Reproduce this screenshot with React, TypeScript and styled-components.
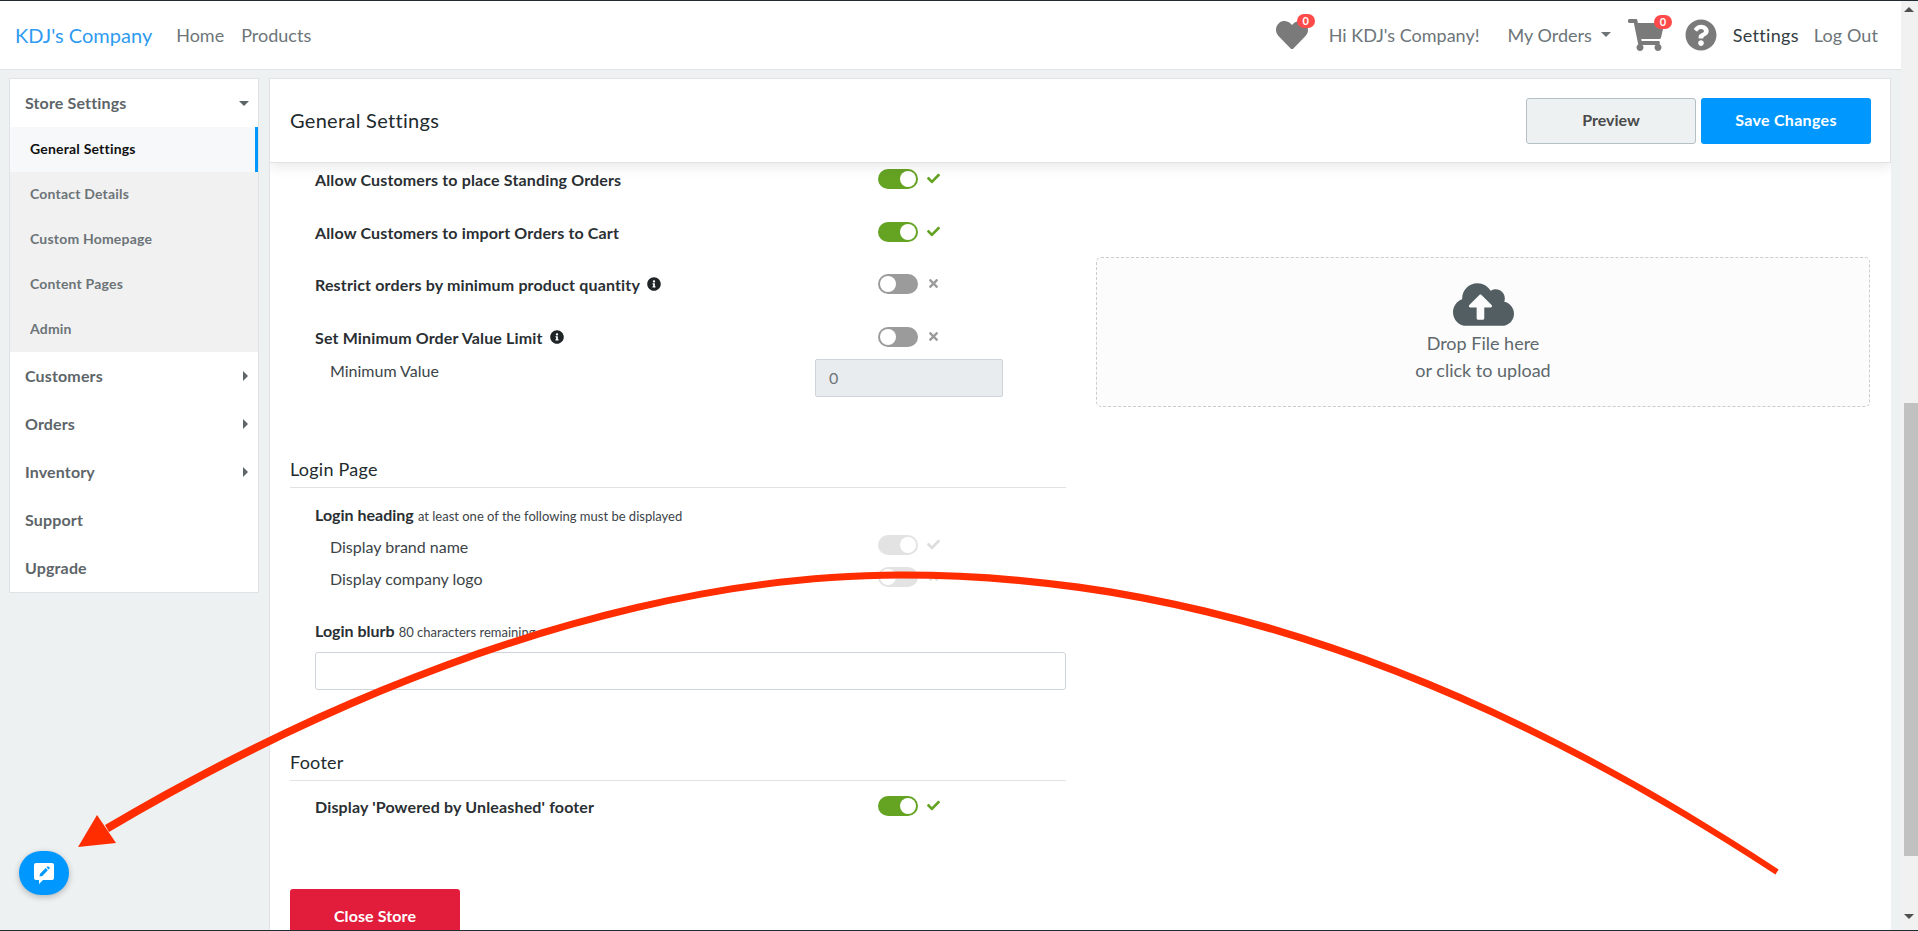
import { ReactNode } from "react";
import styled, { createGlobalStyle } from "styled-components";
import {
  FaCheck,
  FaTimes,
  FaHeart,
  FaShoppingCart,
  FaQuestionCircle,
  FaInfoCircle,
  FaCloudUploadAlt,
} from "react-icons/fa";

const GlobalStyle = createGlobalStyle`
  html, body {
    margin: 0;
    height: 931px;
    overflow: hidden;
    background: #eef1f2;
    font-family: "Lato", "Liberation Sans", sans-serif;
  }
  * { box-sizing: border-box; }
`;

const subItems = ["General Settings", "Contact Details", "Custom Homepage", "Content Pages", "Admin"];
const menuItems = [
  { label: "Customers", arrow: true },
  { label: "Orders", arrow: true },
  { label: "Inventory", arrow: true },
  { label: "Support", arrow: false },
  { label: "Upgrade", arrow: false },
];

const Toggle = ({ on, disabled }: { on: boolean; disabled?: boolean }) => (
  <ToggleWrap>
    <Track $on={on} $disabled={disabled}>
      <Knob />
    </Track>
    <ToggleMark $on={on} $disabled={disabled}>
      {on ? <FaCheck /> : <FaTimes />}
    </ToggleMark>
  </ToggleWrap>
);

const SettingRow = ({
  label,
  info,
  on,
  gap,
}: {
  label: string;
  info?: boolean;
  on: boolean;
  gap: number;
}) => (
  <Row $gap={gap}>
    <RowLabel>
      {label}
      {info && (
        <InfoMark>
          <FaInfoCircle />
        </InfoMark>
      )}
    </RowLabel>
    <Toggle on={on} />
  </Row>
);

const Section = ({ title, children }: { title: string; children: ReactNode }) => (
  <SectionWrap>
    <SectionTitle>{title}</SectionTitle>
    {children}
  </SectionWrap>
);

export default function App() {
  return (
    <>
      <GlobalStyle />
      <Screen>
        <Page>
          <Header>
            <Brand>KDJ's Company</Brand>
            <NavLink $left={24}>Home</NavLink>
            <NavLink $left={17}>Products</NavLink>
            <HeaderRight>
              <IconBadge $size={32}>
                <FaHeart />
                <Badge $top={-5} $right={-7}>
                  0
                </Badge>
              </IconBadge>
              <NavLink $left={21}>Hi KDJ's Company!</NavLink>
              <NavLink $left={28}>My Orders</NavLink>
              <NavCaret />
              <IconBadge $size={36} $left={17}>
                <FaShoppingCart />
                <Badge $top={-2} $right={-8}>
                  0
                </Badge>
              </IconBadge>
              <IconBadge $size={32} $left={21}>
                <FaQuestionCircle />
              </IconBadge>
              <NavLink $left={16} $dark $spacing={0.3}>
                Settings
              </NavLink>
              <NavLink $left={15} $spacing={0.1}>
                Log Out
              </NavLink>
            </HeaderRight>
          </Header>
          <Body>
            <SidebarColumn>
              <Sidebar>
                <MenuRow $height={48}>
                  Store Settings
                  <CaretDown />
                </MenuRow>
                {subItems.map((item, i) => (
                  <SubItem key={item} $active={i === 0}>
                    {item}
                  </SubItem>
                ))}
                {menuItems.map((item) => (
                  <MenuRow key={item.label} $height={48}>
                    {item.label}
                    {item.arrow && <CaretRight />}
                  </MenuRow>
                ))}
              </Sidebar>
            </SidebarColumn>
            <Main>
              <TitleBar>
                <PageTitle>General Settings</PageTitle>
                <TitleActions>
                  <PreviewButton>Preview</PreviewButton>
                  <SaveButton>Save Changes</SaveButton>
                </TitleActions>
              </TitleBar>
              <Columns>
                <LeftColumn>
                  <Rows>
                    <SettingRow label="Allow Customers to place Standing Orders" on gap={33} />
                    <SettingRow label="Allow Customers to import Orders to Cart" on gap={32} />
                    <SettingRow label="Restrict orders by minimum product quantity" info on={false} gap={33} />
                    <SettingRow label="Set Minimum Order Value Limit" info on={false} gap={12} />
                    <MinimumRow>
                      <SubLabel $width={500}>Minimum Value</SubLabel>
                      <ValueInput>0</ValueInput>
                    </MinimumRow>
                  </Rows>
                  <Section title="Login Page">
                    <FieldHeading>
                      <strong>Login heading</strong> <small>at least one of the following must be displayed</small>
                    </FieldHeading>
                    <OptionList>
                      <OptionRow>
                        <SubLabel $width={563}>Display brand name</SubLabel>
                        <Toggle on disabled />
                      </OptionRow>
                      <OptionRow>
                        <SubLabel $width={563}>Display company logo</SubLabel>
                        <Toggle on={false} disabled />
                      </OptionRow>
                    </OptionList>
                    <BlurbHeading>
                      <strong>Login blurb</strong> <small>80 characters remaining.</small>
                    </BlurbHeading>
                    <TextBox />
                  </Section>
                  <FooterSection>
                    <SectionTitle>Footer</SectionTitle>
                    <FooterRow>
                      <SettingRow label="Display 'Powered by Unleashed' footer" on gap={0} />
                    </FooterRow>
                  </FooterSection>
                  <CloseButton>Close Store</CloseButton>
                </LeftColumn>
                <RightColumn>
                  <DropZone>
                    <CloudIcon>
                      <FaCloudUploadAlt />
                    </CloudIcon>
                    <DropText>Drop File here</DropText>
                    <DropText>or click to upload</DropText>
                  </DropZone>
                </RightColumn>
              </Columns>
            </Main>
          </Body>
        </Page>
        <ScrollTrack>
          <ScrollUp />
          <ScrollThumb />
          <ScrollDown />
        </ScrollTrack>
        <FeedbackButton>
          <svg width="22" height="22" viewBox="0 0 22 22">
            <path
              d="M3 1h16a2 2 0 0 1 2 2v13a2 2 0 0 1-2 2h-9l-4 4v-4H3a2 2 0 0 1-2-2V3a2 2 0 0 1 2-2z"
              fill="#fff"
            />
            <path d="M6.5 14.5l.6-2.8 5.6-5.6 2.2 2.2-5.6 5.6z" fill="#0098ff" />
            <path d="M13.5 5.3l.9-.9a.8.8 0 0 1 1.1 0l1.1 1.1a.8.8 0 0 1 0 1.1l-.9.9z" fill="#0098ff" />
          </svg>
        </FeedbackButton>
        <Annotation width="1918" height="931" viewBox="0 0 1918 931">
          <path
            d="M105 825C355 677 640 572 900 571.5C1165 571 1447 650.5 1778.6 869.5L1775.4 874.5C1447 659.5 1165 578.5 900 578.5C640 579 359 684 109 832Z"
            fill="#ff2d00"
          />
          <path d="M78 847L97 815L116 843Z" fill="#ff2d00" />
        </Annotation>
      </Screen>
    </>
  );
}

const Screen = styled.div`
  position: relative;
  display: flex;
  width: 1918px;
  height: 931px;
  overflow: hidden;
  border-top: 1px solid #1f2d33;
  border-bottom: 1px solid #1f2d33;
`;

const Page = styled.div`
  display: flex;
  flex-direction: column;
  width: 1901px;
  background: #eef1f2;
`;

const Header = styled.header`
  display: flex;
  align-items: center;
  flex: none;
  height: 69px;
  padding: 0 23px 0 15px;
  background: #fff;
  border-bottom: 1px solid #dfe3e5;
`;

const Brand = styled.div`
  font-size: 20px;
  color: #2f9bf0;
`;

const NavLink = styled.div<{ $left: number; $dark?: boolean; $spacing?: number }>`
  margin-left: ${(p) => p.$left}px;
  font-size: 18px;
  letter-spacing: ${(p) => p.$spacing ?? 0}px;
  color: ${(p) => (p.$dark ? "#333d42" : "#6d7579")};
  white-space: nowrap;
`;

const HeaderRight = styled.div`
  display: flex;
  align-items: center;
  margin-left: auto;
`;

const IconBadge = styled.div<{ $size: number; $left?: number }>`
  position: relative;
  display: flex;
  margin-left: ${(p) => p.$left ?? 0}px;
  font-size: ${(p) => p.$size}px;
  color: #7a7a7a;
`;

const Badge = styled.span<{ $top: number; $right: number }>`
  position: absolute;
  top: ${(p) => p.$top}px;
  right: ${(p) => p.$right}px;
  width: 18px;
  height: 14px;
  border-radius: 7px;
  background: #ff4a4a;
  color: #fff;
  font-size: 11px;
  font-weight: 700;
  line-height: 14px;
  text-align: center;
`;

const NavCaret = styled.span`
  margin: -2px 0 0 9px;
  border-left: 5px solid transparent;
  border-right: 5px solid transparent;
  border-top: 5px solid #6d7579;
`;

const Body = styled.div`
  display: flex;
  flex: 1;
  min-height: 0;
`;

const SidebarColumn = styled.aside`
  flex: none;
  width: 269px;
  padding: 8px 10px 0 9px;
`;

const Sidebar = styled.nav`
  background: #fff;
  border: 1px solid #dfe3e5;
`;

const MenuRow = styled.div<{ $height: number }>`
  display: flex;
  align-items: center;
  justify-content: space-between;
  height: ${(p) => p.$height}px;
  padding: 0 9px 2px 15px;
  font-size: 16px;
  font-weight: 700;
  letter-spacing: 0.15px;
  color: #5d6569;
`;

const SubItem = styled.div<{ $active?: boolean }>`
  display: flex;
  align-items: center;
  height: 45px;
  padding: 0 0 2px 20px;
  font-size: 14px;
  font-weight: 700;
  letter-spacing: 0.2px;
  color: ${(p) => (p.$active ? "#111" : "#6c7478")};
  background: ${(p) => (p.$active ? "#f7f8fa" : "#f1f1f1")};
  border-right: ${(p) => (p.$active ? "3px solid #0098ff" : "0")};
`;

const CaretDown = styled.span`
  margin-top: 3px;
  border-left: 5px solid transparent;
  border-right: 5px solid transparent;
  border-top: 5px solid #5d6569;
`;

const CaretRight = styled.span`
  margin: 2px 1px 0 0;
  border-top: 5px solid transparent;
  border-bottom: 5px solid transparent;
  border-left: 5px solid #5d6569;
`;

const Main = styled.main`
  display: flex;
  flex-direction: column;
  flex: none;
  width: 1622px;
  margin-top: 8px;
  background: #fff;
  border-left: 1px solid #dfe3e5;
  overflow: hidden;
`;

const TitleBar = styled.div`
  position: relative;
  z-index: 1;
  display: flex;
  align-items: center;
  justify-content: space-between;
  flex: none;
  height: 85px;
  padding: 0 19px 0 20px;
  background: #fff;
  border: 1px solid #dfe3e5;
  border-left: 0;
  box-shadow: 0 4px 12px rgba(0, 0, 0, 0.09);
`;

const PageTitle = styled.h1`
  margin: 0 0 2px;
  font-size: 20px;
  font-weight: 400;
  letter-spacing: 0.3px;
  color: #222a2e;
`;

const TitleActions = styled.div`
  display: flex;
  gap: 5px;
`;

const PreviewButton = styled.button`
  width: 170px;
  height: 46px;
  padding-bottom: 3px;
  border: 1px solid #b4c0c4;
  border-radius: 3px;
  background: #eef1f2;
  color: #4a4a4a;
  font: 700 16px "Lato", sans-serif;
`;

const SaveButton = styled.button`
  width: 170px;
  height: 46px;
  padding-bottom: 3px;
  border: 0;
  border-radius: 3px;
  background: #0098ff;
  color: #fff;
  font: 700 16px "Lato", sans-serif;
  letter-spacing: 0.3px;
`;

const Columns = styled.div`
  display: grid;
  grid-template-columns: 776px 774px;
  column-gap: 30px;
  padding: 6px 0 0 20px;
`;

const LeftColumn = styled.div`
  display: flex;
  flex-direction: column;
  align-items: flex-start;
`;

const Rows = styled.div`
  width: 100%;
  padding-left: 25px;
`;

const Row = styled.div<{ $gap: number }>`
  display: flex;
  height: 20px;
  margin-bottom: ${(p) => p.$gap}px;
`;

const RowLabel = styled.div`
  display: flex;
  align-items: center;
  width: 563px;
  height: 20px;
  font-size: 16px;
  font-weight: 700;
  letter-spacing: 0.15px;
  color: #2a2f33;
`;

const InfoMark = styled.span`
  display: flex;
  margin-left: 7px;
  font-size: 14px;
  color: #1f2426;
`;

const ToggleWrap = styled.div`
  display: flex;
  align-items: center;
  gap: 9px;
`;

const Track = styled.div<{ $on: boolean; $disabled?: boolean }>`
  display: flex;
  justify-content: ${(p) => (p.$on ? "flex-end" : "flex-start")};
  width: 40px;
  height: 20px;
  padding: 2px;
  border-radius: 10px;
  background: ${(p) => (p.$disabled ? "#e3e3e3" : p.$on ? "#65a323" : "#9b9b9b")};
`;

const Knob = styled.span`
  width: 16px;
  height: 16px;
  border-radius: 50%;
  background: #fff;
`;

const ToggleMark = styled.span<{ $on: boolean; $disabled?: boolean }>`
  display: flex;
  margin-top: -2px;
  font-size: 13px;
  color: ${(p) => (p.$disabled ? "#dddddd" : p.$on ? "#65a323" : "#9b9b9b")};
`;

const MinimumRow = styled.div`
  display: flex;
  align-items: flex-start;
`;

const SubLabel = styled.div<{ $width: number }>`
  flex: none;
  width: ${(p) => p.$width}px;
  padding-left: 15px;
  font-size: 16px;
  line-height: 24px;
  color: #3c4448;
`;

const ValueInput = styled.div`
  width: 188px;
  height: 38px;
  padding-left: 13px;
  border: 1px solid #ced4da;
  border-radius: 2px;
  background: #e9ecef;
  font-size: 16px;
  line-height: 36px;
  color: #6d7579;
`;

const SectionWrap = styled.section`
  width: 100%;
  margin-top: 60px;
`;

const FooterSection = styled.section`
  width: 100%;
  margin-top: 60px;
`;

const FooterRow = styled.div`
  padding: 15px 0 0 25px;
`;

const SectionTitle = styled.h2`
  margin: 0;
  height: 31px;
  border-bottom: 1px solid #dfe3e5;
  font-size: 18px;
  font-weight: 400;
  letter-spacing: 0.25px;
  line-height: 25px;
  color: #222a2e;
`;

const FieldHeading = styled.div`
  height: 20px;
  margin: 17px 0 0 25px;
  font-size: 16px;
  line-height: 20px;
  color: #2a2f33;
  small {
    font-size: 13px;
    color: #3c4448;
  }
`;

const BlurbHeading = styled(FieldHeading)`
  height: 21px;
  margin-top: 22px;
`;

const OptionList = styled.div`
  margin: 10px 0 0 25px;
`;

const OptionRow = styled.div`
  display: flex;
  align-items: flex-start;
  height: 32px;
`;

const TextBox = styled.div`
  height: 38px;
  margin: 10px 0 0 25px;
  border: 1px solid #ced4da;
  border-radius: 3px;
  background: #fff;
`;

const CloseButton = styled.button`
  flex: none;
  width: 170px;
  height: 56px;
  margin-top: 73px;
  padding-bottom: 4px;
  border: 0;
  border-radius: 3px;
  background: #e21d3c;
  color: #fff;
  font: 700 16px "Lato", sans-serif;
  letter-spacing: 0.1px;
`;

const RightColumn = styled.div`
  padding-top: 88px;
`;

const DropZone = styled.div`
  display: flex;
  flex-direction: column;
  align-items: center;
  height: 150px;
  padding-top: 21px;
  border: 1px dashed #cccccc;
  border-radius: 5px;
  background: #fcfcfc;
`;

const CloudIcon = styled.div`
  display: flex;
  align-items: center;
  height: 51px;
  font-size: 61px;
  color: #535e62;
`;

const DropText = styled.div`
  font-size: 18px;
  line-height: 27px;
  color: #5e686c;
`;

const ScrollTrack = styled.div`
  display: flex;
  flex-direction: column;
  flex: none;
  align-items: flex-end;
  width: 17px;
  background: #f1f1f1;
`;

const ScrollThumb = styled.div`
  width: 14px;
  height: 453px;
  margin-top: 391px;
  background: #c1c1c1;
`;

const ScrollUp = styled.span`
  margin: 6px 4px 0 0;
  border-left: 5px solid transparent;
  border-right: 5px solid transparent;
  border-bottom: 5px solid #505050;
`;

const ScrollDown = styled.span`
  margin: 58px 4px 0 0;
  border-left: 5px solid transparent;
  border-right: 5px solid transparent;
  border-top: 5px solid #505050;
`;

const FeedbackButton = styled.div`
  position: absolute;
  left: 19px;
  top: 850px;
  display: flex;
  align-items: center;
  justify-content: center;
  width: 50px;
  height: 44px;
  border-radius: 22px;
  background: #0098ff;
  box-shadow: 0 2px 6px rgba(0, 0, 0, 0.25);
`;

const Annotation = styled.svg`
  position: absolute;
  left: 0;
  top: -1px;
  pointer-events: none;
`;
